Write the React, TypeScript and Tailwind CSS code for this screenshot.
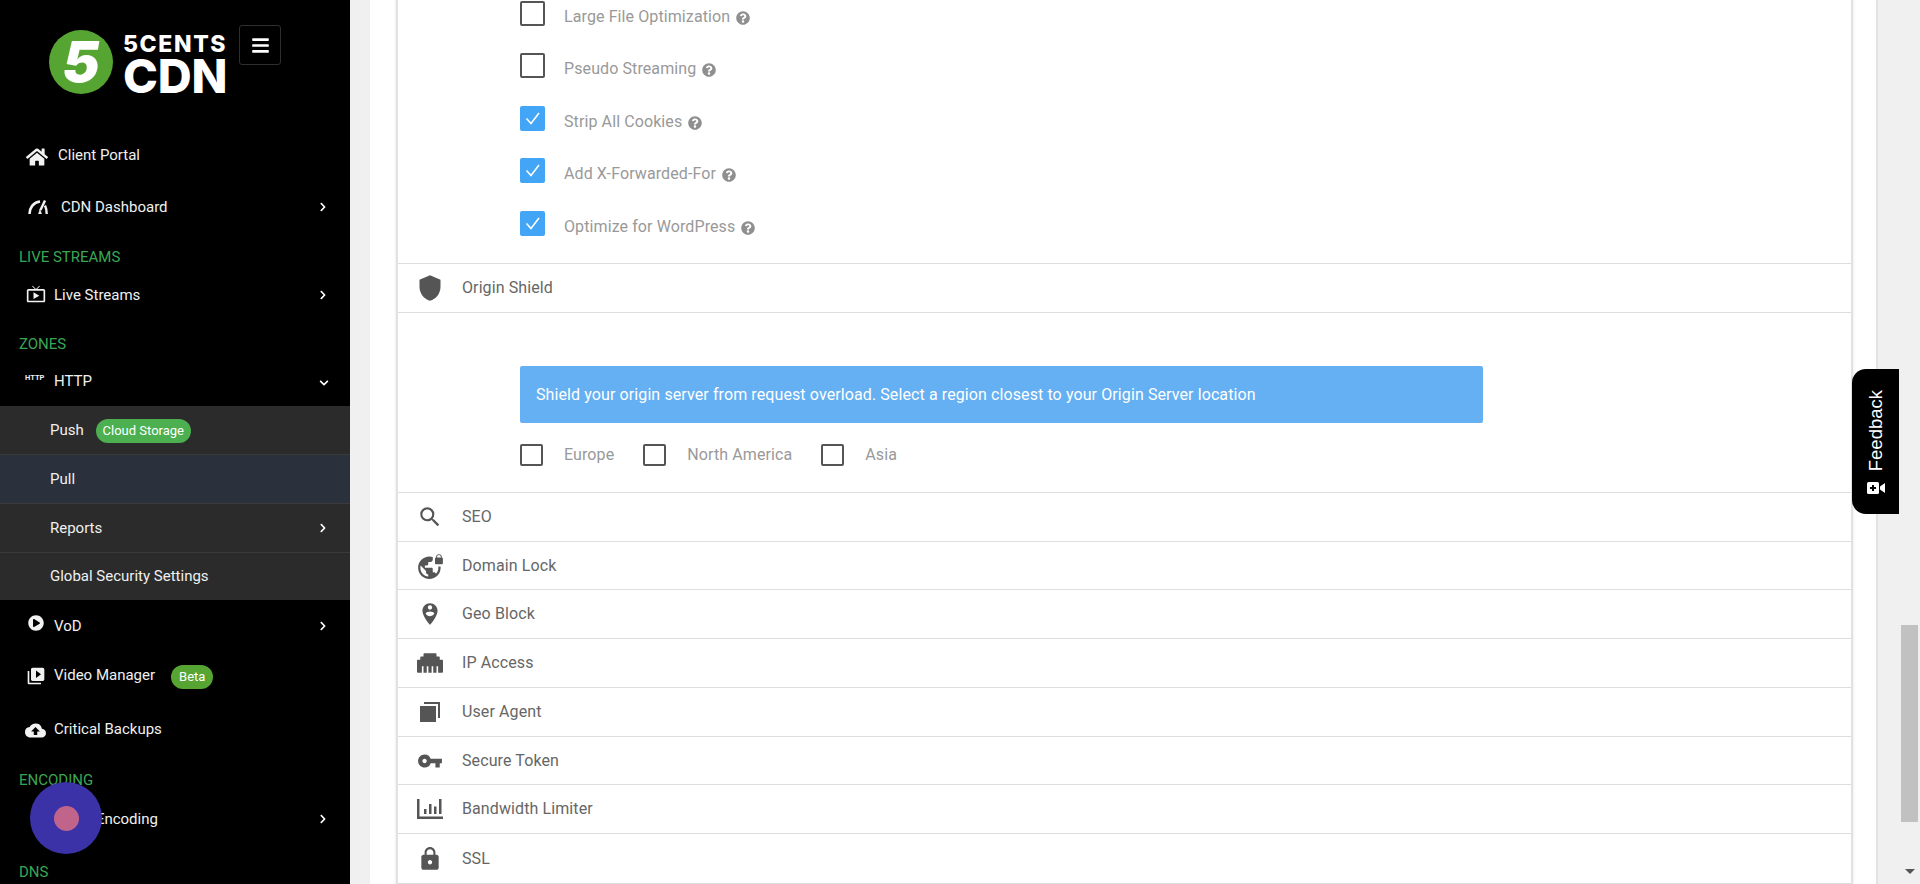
import React from "react";
import { FaHome, FaPlayCircle, FaEthernet, FaQuestionCircle, FaBars, FaChevronRight, FaChevronDown } from "react-icons/fa";
import { MdOutlineLiveTv, MdVideoLibrary, MdCloudUpload, MdShield, MdSearch, MdVpnLock, MdPersonPinCircle, MdVpnKey, MdLock } from "react-icons/md";

const Gauge = () => (
  <svg viewBox="0 0 20 14" className="w-[20px] h-[14px] -mr-[2px]" fill="none" stroke="#f2f2f2">
    <path d="M1.500 14C1.500 8 5 2.500 12 1.500" strokeWidth="2.600" />
    <path d="M17 5.500c1.200 2.500 1.700 5 1.700 8.500" strokeWidth="2.400" />
    <path d="M17 0.500l-4.500 9.500" strokeWidth="2.400" />
    <path d="M12 9l-1.500 5h3z" fill="#f2f2f2" strokeWidth="0.500" />
  </svg>
);

const Section = ({ label, className }: { label: string; className: string }) => (
  <div className={`pl-[19px] text-[15px] leading-[20px] text-[#3aa655] ${className}`}>{label}</div>
);

const Chevron = () => <FaChevronRight className="ml-auto mr-[22px] text-white" size={10} />;

const NavRow = ({ icon, label, className, textClass, badge, chevron }: { icon: React.ReactNode; label: string; className: string; textClass: string; badge?: React.ReactNode; chevron?: boolean }) => (
  <div className={`flex items-center text-[15px] text-[#f0f0f0] ${className}`}>
    <div className="w-[54px] shrink-0 flex justify-end pr-[8px]">{icon}</div>
    <span className={textClass}>{label}</span>
    {badge}
    {chevron && <Chevron />}
  </div>
);

const SubRow = ({ label, bg, badge, chevron }: { label: string; bg: string; badge?: React.ReactNode; chevron?: boolean }) => (
  <div className={`h-[49px] flex items-center pl-[50px] text-[15px] text-[#f0f0f0] border-b border-[#3a3a3a] ${bg}`}>
    <span>{label}</span>
    {badge}
    {chevron && <Chevron />}
  </div>
);

const Check = ({ checked, size = "w-[25px] h-[25px]" }: { checked?: boolean; size?: string }) => (
  <div className={`${size} rounded-[2px] flex items-center justify-center shrink-0 ${checked ? "bg-[#42a5f5]" : "border-2 border-[#555555] bg-white"}`}>
    {checked && (
      <svg viewBox="0 0 25 25" className="w-[25px] h-[25px]" fill="none" stroke="#fff" strokeWidth="1.600">
        <path d="M6.500 12.500l4.500 5 8-10.500" />
      </svg>
    )}
  </div>
);

const CheckRow = ({ label, checked, h }: { label: string; checked?: boolean; h: string }) => (
  <div className={`${h} flex items-start pl-[122px]`}>
    <div className="mt-[10px]"><Check checked={checked} /></div>
    <div className="h-[52px] flex items-center">
      <span className="ml-[19px] text-[16px] tracking-[0.1px] text-[#999999]">{label}</span>
      <FaQuestionCircle className="ml-[6px] mt-[1px] text-[#8f8f8f]" size={14} />
    </div>
  </div>
);

const Row = ({ icon, label, h = "h-[49px]" }: { icon: React.ReactNode; label: string; h?: string }) => (
  <div className={`${h} flex items-center border-b border-[#dddddd] text-[#666666] text-[16px] tracking-[0.1px]`}>
    <div className="w-[64px] shrink-0 flex justify-center text-[#555555]">{icon}</div>
    <span>{label}</span>
  </div>
);

const Region = ({ label }: { label: string }) => (
  <>
    <Check size="w-[23px] h-[22px]" />
    <span className="ml-[21px] text-[16px] tracking-[0.1px] text-[#999999]">{label}</span>
  </>
);

const BarsIcon = () => (
  <svg viewBox="0 0 26 20" className="w-[26px] h-[20px]" fill="#555555">
    <path d="M0 0h2.500v17.500H26V20H0z" />
    <rect x="7" y="10" width="2.500" height="5" />
    <rect x="12" y="5" width="2.500" height="10" />
    <rect x="17" y="7.500" width="2.500" height="7.500" />
    <rect x="22" y="0" width="2.500" height="15" />
  </svg>
);

const AgentIcon = () => (
  <svg viewBox="0 0 20 20" className="w-[20px] h-[20px]" fill="#555555">
    <rect x="0" y="4" width="16" height="16" />
    <path d="M4 0h16v16h-2V2H4z" />
  </svg>
);

const FeedbackCam = () => (
  <svg viewBox="0 0 18 12" className="w-[18px] h-[12px]" fill="#fff">
    <rect x="0" y="0" width="12" height="12" rx="1.500" />
    <path d="M5 3h2v2h2v2H7v2H5V7H3V5h2z" fill="#000" />
    <path d="M13 4.500L18 1v10l-5-3.500z" />
  </svg>
);

export default function App() {
  return (
    <div className="h-[884px] w-full flex overflow-hidden bg-[#f0f0f0] font-['Roboto',sans-serif] relative">
      {/* Sidebar */}
      <aside className="w-[350px] shrink-0 bg-black flex flex-col overflow-hidden">
        <div className="h-[132px] shrink-0 flex items-start pl-[49px] pt-[25px]">
          <div className="mt-[5px] w-[64px] h-[64px] rounded-full bg-[#56a432] flex items-center justify-center shrink-0">
            <span className="text-white font-['Inter',sans-serif] font-black italic text-[56px] leading-none">5</span>
          </div>
          <div className="ml-[10px] mt-[7px] w-[103px] text-white font-['Inter',sans-serif] font-extrabold">
            <div className="text-[23px] leading-[24px] tracking-[1.600px] whitespace-nowrap">5CENTS</div>
            <div className="text-[47px] leading-[38px] -tracking-[0.2px] mt-[1px]">CDN</div>
          </div>
          <button className="ml-[13px] w-[42px] h-[40px] border border-[#2f2f2f] rounded-[3px] flex items-center justify-center text-white">
            <FaBars size={19} />
          </button>
        </div>
        <NavRow className="h-[46px]" textClass="ml-[4px]" icon={<FaHome size={22} className="text-[#f2f2f2] mt-[4px] -mr-[2px]" />} label="Client Portal" />
        <NavRow className="h-[58px]" textClass="ml-[7px]" icon={<Gauge />} label="CDN Dashboard" chevron />
        <Section label="LIVE STREAMS" className="h-[20px] mt-[11px]" />
        <NavRow className="h-[56px]" textClass="" icon={<MdOutlineLiveTv size={20} className="text-[#f2f2f2] -mt-[3px]" />} label="Live Streams" chevron />
        <Section label="ZONES" className="h-[20px] mt-[11px]" />
        <div className="h-[52px] flex items-center text-[15px] text-[#f0f0f0]">
          <div className="w-[54px] pl-[25px] pb-[5px] text-[7.500px] font-bold leading-none text-[#f0f0f0]">HTTP</div>
          <span className="mt-[2px]">HTTP</span>
          <FaChevronDown className="ml-auto mr-[21px] mt-[5px] text-white" size={10} />
        </div>
        <SubRow bg="bg-[#2b2b2b]" label="Push" badge={
          <span className="ml-[12px] mt-[1px] h-[24px] w-[95px] rounded-full bg-[#4caf50] text-white text-[13px] flex items-center justify-center">Cloud Storage</span>
        } />
        <SubRow bg="bg-[#2a303c]" label="Pull" />
        <SubRow bg="bg-[#2b2b2b]" label="Reports" chevron />
        <div className="h-[47px] flex items-center pl-[50px] text-[15px] text-[#f0f0f0] bg-[#2b2b2b]">
          <span>Global Security Settings</span>
        </div>
        <NavRow className="h-[50px] pt-[2px]" textClass="" icon={<FaPlayCircle size={16} className="text-[#f2f2f2] -mt-[6px] mr-[2px]" />} label="VoD" chevron />
        <NavRow className="h-[50px]" textClass="" icon={<MdVideoLibrary size={20} className="text-[#f2f2f2] mt-[2px]" />} label="Video Manager" badge={
          <span className="ml-[16px] mt-[3px] h-[24px] px-[8px] rounded-full bg-[#56a432] text-white text-[13px] flex items-center">Beta</span>
        } />
        <NavRow className="h-[58px]" textClass="" icon={<MdCloudUpload size={21} className="text-[#f2f2f2] mt-[2px]" />} label="Critical Backups" />
        <Section label="ENCODING" className="h-[20px] mt-[12px]" />
        <NavRow className="h-[58px]" textClass="" icon={<FaChevronDown size={9} className="text-[#f2f2f2]" />} label="Video Encoding" chevron />
        <Section label="DNS" className="h-[20px] mt-[14px]" />
      </aside>

      {/* Gutter + content */}
      <div className="w-[20px] shrink-0" />
      <main className="w-[1508px] shrink-0 bg-white pl-[26px] pr-[23px] border-r-2 border-[#e2e2e2] overflow-hidden">
        <div className="-mt-[9px] border-x-2 border-b-2 border-[#e2e2e2] shadow-sm">
          <div className="pb-[9px] border-b border-[#dddddd]">
            <CheckRow h="h-[52px]" label="Large File Optimization" />
            <CheckRow h="h-[53px]" label="Pseudo Streaming" />
            <CheckRow h="h-[52px]" label="Strip All Cookies" checked />
            <CheckRow h="h-[53px]" label="Add X-Forwarded-For" checked />
            <CheckRow h="h-[53px]" label="Optimize for WordPress" checked />
          </div>
          <Row icon={<MdShield size={28} />} label="Origin Shield" />
          <div className="h-[180px] pl-[122px] pt-[53px] border-b border-[#dddddd]">
            <div className="w-[963px] h-[57px] rounded-[2px] bg-[#64b0f2] text-white text-[16px] tracking-[0.1px] flex items-center pl-[16px] pt-[1px]">
              Shield your origin server from request overload. Select a region closest to your Origin Server location
            </div>
            <div className="flex items-center mt-[20px]">
              <Region label="Europe" />
              <div className="w-[29px]" />
              <Region label="North America" />
              <div className="w-[29px]" />
              <Region label="Asia" />
            </div>
          </div>
          <Row icon={<MdSearch size={26} />} label="SEO" />
          <Row icon={<MdVpnLock size={27} />} label="Domain Lock" h="h-[48px] pt-[1px]" />
          <Row icon={<MdPersonPinCircle size={26} />} label="Geo Block" />
          <Row icon={<FaEthernet size={26} />} label="IP Access" />
          <Row icon={<AgentIcon />} label="User Agent" />
          <Row icon={<MdVpnKey size={26} />} label="Secure Token" h="h-[48px] pt-[1px]" />
          <Row icon={<BarsIcon />} label="Bandwidth Limiter" />
          <Row icon={<MdLock size={26} />} label="SSL" h="h-[50px]" />
        </div>
      </main>

      {/* Scrollbar */}
      <div className="flex-1 flex flex-col items-end pt-[625px] pr-[2px]">
        <div className="w-[17px] h-[197px] bg-[#c1c1c1]" />
        <div className="mt-[47px] mr-[3px] w-0 h-0 border-x-[5px] border-x-transparent border-t-[5px] border-t-[#555555]" />
      </div>

      {/* Feedback tab */}
      <div className="absolute left-[1852px] top-[369px] w-[47px] h-[145px] bg-black rounded-l-[14px] flex flex-col items-center justify-center gap-[10px] pt-[1px] text-white">
        <span className="ml-[1px] [writing-mode:vertical-rl] rotate-180 font-['Liberation_Sans',sans-serif] text-[18.500px] leading-none">Feedback</span>
        <FeedbackCam />
      </div>

      {/* Recording dot */}
      <div className="absolute left-[30px] top-[782px] w-[72px] h-[72px] rounded-full bg-[#3b32a8] flex items-center justify-center">
        <div className="w-[25px] h-[25px] rounded-full bg-[#c1648c]" />
      </div>
    </div>
  );
}
